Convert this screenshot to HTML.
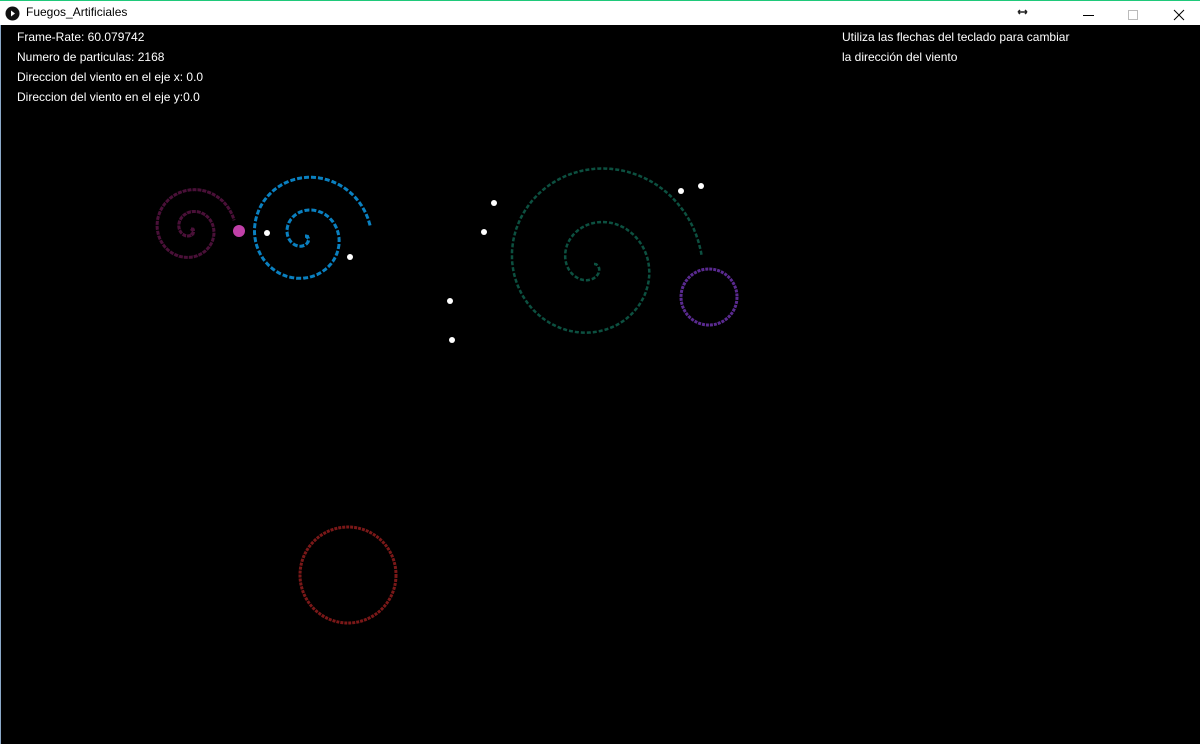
<!DOCTYPE html><html><head><style>
body{margin:0;width:1200px;height:744px;overflow:hidden;background:#000;font-family:"Liberation Sans",sans-serif}
#tb{position:absolute;left:0;top:0;width:1200px;height:25px;background:#fff;border-top:1px solid #1fc97a;box-sizing:border-box}
#tb .t{position:absolute;left:26px;top:4px;font-size:12px;color:#000}
#lb{position:absolute;left:0;top:25px;width:1px;height:719px;background:#8aa8c8}
.txt{position:absolute;color:#fff;font-size:12px}
</style></head><body>
<div id="tb"><svg style="position:absolute;left:5px;top:5px" width="15" height="15"><circle cx="7.5" cy="7.5" r="7" fill="#111"/><path d="M6 4.5L10 7.5L6 10.5Z" fill="#fff"/></svg><span class="t">Fuegos_Artificiales</span>
<svg style="position:absolute;left:1016px;top:5px" width="184" height="16"><path d="M2 6H11M2 6L4 4M2 6L4 8M11 6L9 4M11 6L9 8" stroke="#222" stroke-width="1.5" fill="none"/><path d="M67 9.5H78" stroke="#000"/><rect x="112.5" y="4.5" width="9" height="9" fill="none" stroke="#bbb"/><path d="M158 4L168 14M168 4L158 14" stroke="#000"/></svg></div>
<div id="lb"></div>
<div class="txt" style="left:17px;top:30px">Frame-Rate: 60.079742</div>
<div class="txt" style="left:17px;top:50px">Numero de particulas: 2168</div>
<div class="txt" style="left:17px;top:70px">Direccion del viento en el eje x: 0.0</div>
<div class="txt" style="left:17px;top:90px">Direccion del viento en el eje y:0.0</div>
<div class="txt" style="left:842px;top:30px">Utiliza las flechas del teclado para cambiar</div>
<div class="txt" style="left:842px;top:50px">la dirección del viento</div>
<svg id="s" width="1200" height="744" style="position:absolute;left:0;top:0">
<circle cx="709" cy="297" r="28" fill="none" stroke="#5a2a90" stroke-width="3" stroke-dasharray="3 1"/>
<circle cx="348" cy="575" r="48" fill="none" stroke="#7a1818" stroke-width="3" stroke-dasharray="3 1"/>
<circle cx="239" cy="231" r="6" fill="#c040a8"/>
<g fill="#fff"><circle cx="267" cy="233" r="3"/><circle cx="350" cy="257" r="3"/><circle cx="494" cy="203" r="3"/><circle cx="484" cy="232" r="3"/><circle cx="450" cy="301" r="3"/><circle cx="452" cy="340" r="3"/><circle cx="681" cy="191" r="3"/><circle cx="701" cy="186" r="3"/></g>
</svg>
<script>
function sp(cx,cy,R,turns,endA,col,w,dash){const rot=endA-turns*2*Math.PI;const a=R/(turns*2*Math.PI);let d='';const n=800;for(let i=0;i<=n;i++){const t=i/n*turns*2*Math.PI;const r=a*t;const x=cx+r*Math.cos(t+rot),y=cy+r*Math.sin(t+rot);d+=(i?'L':'M')+x.toFixed(1)+' '+y.toFixed(1);}
const p=document.createElementNS('http://www.w3.org/2000/svg','path');p.setAttribute('d',d);p.setAttribute('fill','none');p.setAttribute('stroke',col);p.setAttribute('stroke-width',w);if(dash)p.setAttribute('stroke-dasharray',dash);document.getElementById('s').appendChild(p);}
sp(191,229,44,2.0,-0.2,'#4a1038',3,'4 1');
sp(305,236,66,2.0,-0.14,'#0a80c0',3,'5 2');
sp(594,264,108,2.0,-0.07,'#0c5040',2.5,'4 2');
</script>
</body></html>
